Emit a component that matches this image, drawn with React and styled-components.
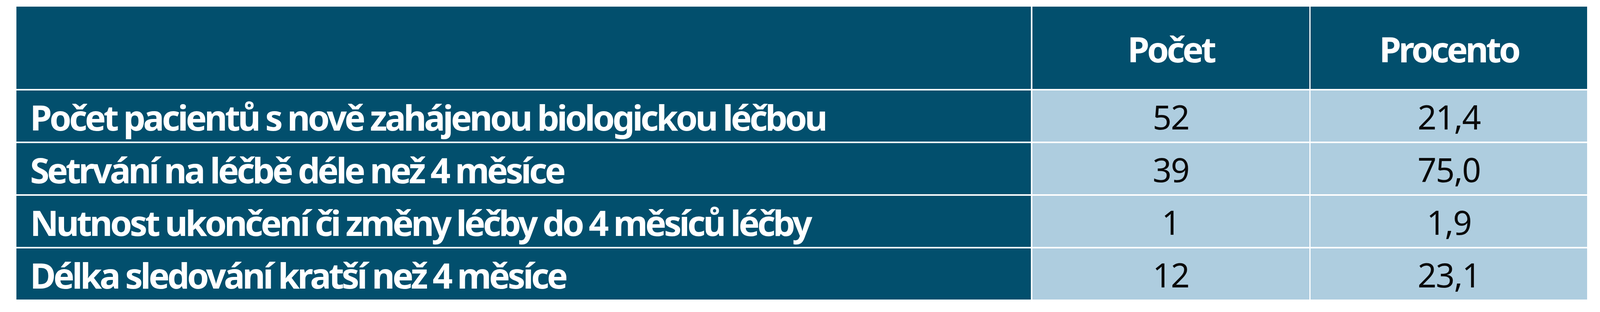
import { Fragment } from "react";
import styled, { createGlobalStyle } from "styled-components";

const DARK = "#024f6d";
const LIGHT = "#aecddf";

// the reference is 4634px wide: horizontal sizes follow the viewport width
const X = (px) => `${((px / 4634) * 100).toFixed(4)}vw`;

const ROWS = [
  { label: "Počet pacientů s nově zahájenou biologickou léčbou", count: "52", pct: "21,4" },
  { label: "Setrvání na léčbě déle než 4 měsíce", count: "39", pct: "75,0", short: true },
  { label: "Nutnost ukončení či změny léčby do 4 měsíců léčby", count: "1", pct: "1,9" },
  { label: "Délka sledování kratší než 4 měsíce", count: "12", pct: "23,1" },
];

const GlobalStyle = createGlobalStyle`
  html, body {
    margin: 0;
    background: #fff;
    overflow: hidden;
  }
  body {
    font-family: "Noto Sans", "Open Sans", sans-serif;
  }
`;

const Page = styled.div`
  padding: 17px 0 0 ${X(48)};
`;

const Table = styled.div`
  display: grid;
  grid-template-columns: ${X(2938)} ${X(802)} ${X(801)};
  grid-template-rows: 211px;
  grid-auto-rows: 131px;
  row-gap: 4px;
  column-gap: ${X(4)};
`;

const Cell = styled.div`
  display: flex;
  align-items: center;
  justify-content: center;
  min-width: 0;
  background: ${DARK};
  color: #fff;
  font-family: "Noto Sans", "Open Sans", sans-serif;
  font-weight: 700;
  font-size: 90px;
  letter-spacing: -6px;
  line-height: 1;
  white-space: nowrap;
  ${(p) => p.$short && "height: 127px; align-self: start;"}
`;

const HeadCell = styled(Cell)`
  padding-top: 4px;
`;

const LabelCell = styled(Cell)`
  justify-content: flex-start;
  padding: 4px 0 0 ${X(39)};
`;

const ValueCell = styled(Cell)`
  background: ${LIGHT};
  color: #0a0a0a;
  font-weight: 400;
  font-size: 85px;
  letter-spacing: -2px;
  padding-top: 4px;
`;

export default function App() {
  return (
    <Page>
      <GlobalStyle />
      <Table>
        <Cell />
        <HeadCell>Počet</HeadCell>
        <HeadCell>Procento</HeadCell>
        {ROWS.map((r) => (
          <Fragment key={r.label}>
            <LabelCell $short={r.short}>{r.label}</LabelCell>
            <ValueCell $short={r.short}>{r.count}</ValueCell>
            <ValueCell $short={r.short}>{r.pct}</ValueCell>
          </Fragment>
        ))}
      </Table>
    </Page>
  );
}
